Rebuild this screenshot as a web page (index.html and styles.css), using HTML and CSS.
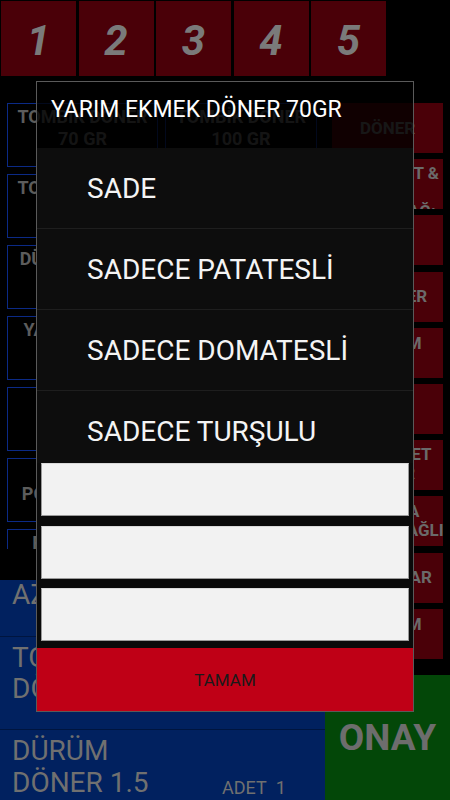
FILE: index.html
```html
<!DOCTYPE html>
<html lang="tr">
<head>
    <meta charset="utf-8"/>
    <meta content="width=device-width, initial-scale=1" name="viewport"/>
    <title>siparis</title>
    <link rel="stylesheet" href="styles.css">
</head>
<body>
<div class="screen">

    <div class="tabs">
        <div class="tab">1</div>
        <div class="tab">2</div>
        <div class="tab">3</div>
        <div class="tab">4</div>
        <div class="tab">5</div>
    </div>

    <div class="main">
        <div class="left">
            <div class="products">
                <div class="product">TOMBİK DÖNER<br>70 GR</div>
                <div class="product">TOMBİK DÖNER<br>100 GR</div>
                <div class="product">TOMBİK DÖNER<br>150 GR</div>
                <div class="product">TOMBİK DÖNER<br>200 GR</div>
                <div class="product">DÜRÜM DÖNER<br>70 GR</div>
                <div class="product">DÜRÜM DÖNER<br>100 GR</div>
                <div class="product">YARIM EKMEK<br>DÖNER</div>
                <div class="product">TAM EKMEK<br>DÖNER</div>
                <div class="product">İSKENDER</div>
                <div class="product">PİLAV ÜSTÜ</div>
                <div class="product mid">PORSİYON ÇİĞ</div>
                <div class="product mid">PORSİYON</div>
                <div class="product">PİLAV ÜSTÜ</div>
                <div class="product">SALATA</div>
            </div>

            <div class="cart">
                <div class="cart-row first">AZ PİŞMİŞ</div>
                <div class="cart-row second">TOMBİK<br>DÖNER</div>
                <div class="cart-row third">
                    <span class="cart-name">DÜRÜM<br>DÖNER 1.5</span>
                    <span class="qty">ADET&nbsp; 1</span>
                </div>
            </div>
        </div>

        <div class="right">
            <div class="extras">
                <div class="extra">DÖNER</div>
                <div class="extra top">EKSTRA ET &amp;<br>ÖZEL<br>DÖNER YAĞ:</div>
                <div class="extra">FANTA</div>
                <div class="extra">İSKENDER</div>
                <div class="extra">ŞALGAM<br>İÇLİ</div>
                <div class="extra">SU</div>
                <div class="extra top">EKSTRA ET<br>DÖNER</div>
                <div class="extra">EKSTRA<br>AZ TEREYAĞLI</div>
                <div class="extra">SOĞANLAR</div>
                <div class="extra">ŞALGAM<br>İÇLİ</div>
            </div>
            <div class="onay">ONAY</div>
        </div>
    </div>

    <!-- secim penceresi -->
    <div class="dialog">
        <div class="dialog-title">YARIM EKMEK DÖNER 70GR</div>
        <div class="options">
            <div class="option">SADE</div>
            <div class="option">SADECE PATATESLİ</div>
            <div class="option">SADECE DOMATESLİ</div>
            <div class="option">SADECE TURŞULU</div>
        </div>
        <div class="fields">
            <div class="field"></div>
            <div class="field"></div>
            <div class="field"></div>
        </div>
        <div class="ok-btn">TAMAM</div>
    </div>

</div>
</body>
</html>
```

FILE: styles.css
```css
html, body {
    margin: 0;
    background: #000;
}

.screen {
    position: relative;
    width: 450px;
    height: 800px;
    overflow: hidden;
    font-family: Roboto, "Liberation Sans", sans-serif;
}

/* masa sekmeleri */
.tabs {
    display: flex;
    gap: 2.5px;
    padding: 1px 0 0 1px;
    height: 75px;
}

.tab {
    width: 75px;
    height: 75px;
    background: #4a0008;
    color: #7a7a7a;
    font-size: 42px;
    font-weight: bold;
    font-style: italic;
    display: flex;
    align-items: center;
    justify-content: center;
    padding-top: 3px;
    box-sizing: border-box;
}

.main {
    display: flex;
    height: 724px;
}

.left {
    width: 325px;
    display: flex;
    flex-direction: column;
}

.products {
    margin: 27px 0 0 7px;
    width: 310px;
    height: 446px;
    overflow: hidden;
    display: grid;
    grid-template-columns: 151px 152px;
    grid-auto-rows: 64px;
    gap: 7px;
    align-content: start;
}

.product {
    border: 1px solid #0b2a86;
    color: #5c5c5c;
    font-size: 18px;
    font-weight: bold;
    line-height: 22px;
    text-align: center;
    padding-top: 2px;
    box-sizing: border-box;
    white-space: nowrap;
}

.product.mid {
    display: flex;
    align-items: center;
    justify-content: center;
    padding-top: 7px;
}

.cart {
    margin-top: auto;
    height: 220px;
    background: #01215f;
    color: #707070;
    font-size: 28px;
}

.cart-row {
    padding-left: 12px;
    box-sizing: border-box;
}

.cart-row.first {
    height: 57px;
    padding-top: 1px;
    line-height: 28px;
    border-bottom: 1px solid #00153f;
}

.cart-row.second {
    height: 93px;
    padding-top: 5px;
    line-height: 31px;
    border-bottom: 1px solid #00153f;
}

.cart-row.third {
    height: 70px;
    padding-top: 5px;
    line-height: 32px;
    display: flex;
    align-items: flex-end;
}

.cart-name {
    width: 210px;
    align-self: flex-start;
}

.qty {
    font-size: 18px;
    line-height: 21px;
    padding-bottom: 2px;
}

.right {
    width: 125px;
    display: flex;
    flex-direction: column;
}

.extras {
    margin: 27px 0 0 7px;
    width: 111px;
    display: grid;
    grid-auto-rows: 50px;
    row-gap: 6.2px;
}

.extra {
    background: #4a0008;
    color: #6a6a6a;
    font-size: 17px;
    font-weight: bold;
    line-height: 19px;
    text-align: center;
    display: flex;
    align-items: center;
    justify-content: center;
    overflow: hidden;
    white-space: nowrap;
}

.extra.top {
    align-items: flex-start;
    padding-top: 5px;
}

.onay {
    margin-top: auto;
    height: 125px;
    background: #034708;
    color: #6d6d6d;
    font-size: 37px;
    font-weight: bold;
    display: flex;
    align-items: center;
    justify-content: center;
}

/* dialog */
.dialog {
    position: absolute;
    left: 36px;
    top: 81px;
    width: 378px;
    height: 631px;
    box-sizing: border-box;
    border: 1px solid #5a5a5a;
    display: flex;
    flex-direction: column;
}

.dialog-title {
    height: 66px;
    box-sizing: border-box;
    padding: 15px 0 0 14px;
    background: rgba(0, 0, 0, 0.78);
    color: #fff;
    font-size: 23px;
    line-height: 26px;
}

.options {
    height: 315px;
    overflow: hidden;
    background: #0d0d0d;
}

.option {
    height: 81px;
    box-sizing: border-box;
    border-bottom: 1px solid #1e1e1e;
    padding-left: 50px;
    display: flex;
    align-items: center;
    color: #f4f4f4;
    font-size: 28px;
}

.fields {
    display: flex;
    flex-direction: column;
    gap: 9.5px;
    padding: 0 4px 7px;
    background: #0a0a0a;
}

.field {
    height: 53px;
    box-sizing: border-box;
    background: #f2f2f2;
    border: 1px solid #9a9a9a;
    border-top-color: #dadada;
}

.ok-btn {
    flex: 1;
    background: #bf0016;
    color: #1a1a1a;
    font-size: 17px;
    display: flex;
    align-items: center;
    justify-content: center;
}
```
